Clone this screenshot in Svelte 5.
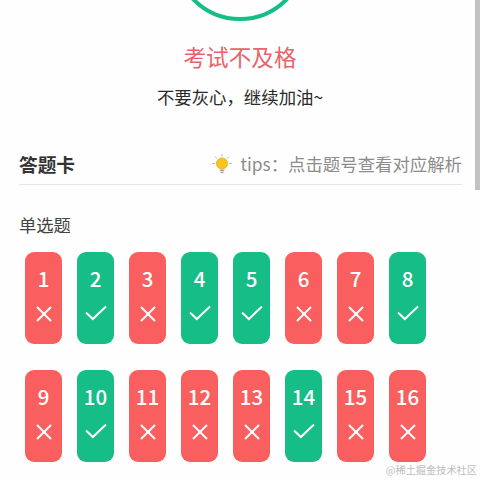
<script lang="ts">
    const results = [
        [false, true, false, true, true, false, false, true],
        [false, true, false, false, false, true, false, false]
    ];
    let rows = results.map((row, r) =>
        row.map((ok, i) => ({ num: r * 8 + i + 1, ok }))
    );
</script>

<div class="page">
    <div class="hero">
        <div class="ring"></div>
        <h1>考试不及格</h1>
        <p>不要灰心，继续加油~</p>
    </div>

    <div class="card-head">
        <h2>答题卡</h2>
        <div class="tips">
            <svg viewBox="0 0 20 20" width="20" height="20">
                <g stroke="#a9a9a9" stroke-width="1" stroke-linecap="round">
                    <line x1="10" y1="0.5" x2="10" y2="2" />
                    <line x1="3.4" y1="3" x2="4.5" y2="4.1" />
                    <line x1="16.6" y1="3" x2="15.5" y2="4.1" />
                    <line x1="0.8" y1="9.5" x2="2.4" y2="9.5" />
                    <line x1="19.2" y1="9.5" x2="17.6" y2="9.5" />
                </g>
                <circle cx="10" cy="9.5" r="5.6" fill="#fcc419" stroke="#c9a02a" stroke-width="0.6" />
                <rect x="7.6" y="15.8" width="4.8" height="1.2" rx="0.6" fill="#9a9a9a" />
                <rect x="8.4" y="17.8" width="3.2" height="1.1" rx="0.5" fill="#9a9a9a" />
            </svg>
            <span>tips：点击题号查看对应解析</span>
        </div>
    </div>

    <div class="section">单选题</div>

    <div class="grid">
        {#each rows as row}
            <div class="row">
                {#each row as item}
                    <div class="item" class:ok={item.ok}>
                        <span class="num">{item.num}</span>
                        {#if item.ok}
                            <svg viewBox="0 0 22 16" width="22" height="16" fill="none" stroke="#fff" stroke-width="2">
                                <polyline points="1,7.5 7.8,14 21,1.5" />
                            </svg>
                        {:else}
                            <svg viewBox="0 0 18 18" width="18" height="18" fill="none" stroke="#fff" stroke-width="2">
                                <line x1="2" y1="2" x2="16" y2="16" />
                                <line x1="16" y1="2" x2="2" y2="16" />
                            </svg>
                        {/if}
                    </div>
                {/each}
            </div>
        {/each}
    </div>

    <div class="scrollbar"></div>
    <div class="mark">@稀土掘金技术社区</div>
</div>

<style>
    :global(body) {
        margin: 0;
        background: #fff;
    }

    .page {
        position: relative;
        width: 480px;
        height: 480px;
        overflow: hidden;
        background: #fefefe;
        font-family: "Noto Sans CJK SC", sans-serif;
    }

    .hero {
        display: flex;
        flex-direction: column;
        align-items: center;
        height: 133px;
    }

    .ring {
        flex: none;
        width: 134px;
        height: 134px;
        margin-top: -113px;
        border: 4.5px solid #17bd87;
        border-radius: 50%;
        box-sizing: border-box;
    }

    h1 {
        margin: 20px 0 0;
        font-size: 22.6px;
        line-height: 32px;
        font-weight: 400;
        color: #e8636a;
    }

    p {
        margin: 10px 0 0;
        padding-top: 2px;
        font-size: 17.4px;
        line-height: 24px;
        color: #2a2a2a;
    }

    .card-head {
        display: flex;
        align-items: center;
        justify-content: space-between;
        height: 52px;
        margin: 0 18px 0 19px;
        padding-top: 10px;
        border-bottom: 1px solid #e6e6e6;
        box-sizing: border-box;
    }

    h2 {
        margin: 0;
        font-size: 18.7px;
        font-weight: 700;
        color: #333;
    }

    .tips {
        display: flex;
        align-items: center;
        gap: 8px;
        font-size: 17.4px;
        color: #8c8c8c;
    }

    .section {
        margin: 28px 0 0 19px;
        font-size: 17.3px;
        line-height: 24px;
        color: #444;
    }

    .grid {
        display: flex;
        flex-direction: column;
        gap: 26px;
        margin: 15px 0 0 25px;
    }

    .row {
        display: flex;
        gap: 15px;
    }

    .item {
        display: flex;
        flex-direction: column;
        align-items: center;
        width: 37px;
        height: 92px;
        border-radius: 9px;
        background: #fa5f5f;
    }

    .item.ok {
        background: #17bd87;
    }

    .num {
        height: 38px;
        margin-top: 9px;
        font-size: 20.5px;
        line-height: 34px;
        font-weight: 500;
        color: #fff;
    }

    .item svg {
        margin-top: 6px;
    }

    .scrollbar {
        position: absolute;
        top: 0;
        right: 0;
        width: 5px;
        height: 190px;
        background: #c2c2c2;
    }

    .mark {
        position: absolute;
        right: 3px;
        bottom: 2px;
        font-size: 10.2px;
        line-height: 16px;
        color: #bdbdbd;
    }
</style>
